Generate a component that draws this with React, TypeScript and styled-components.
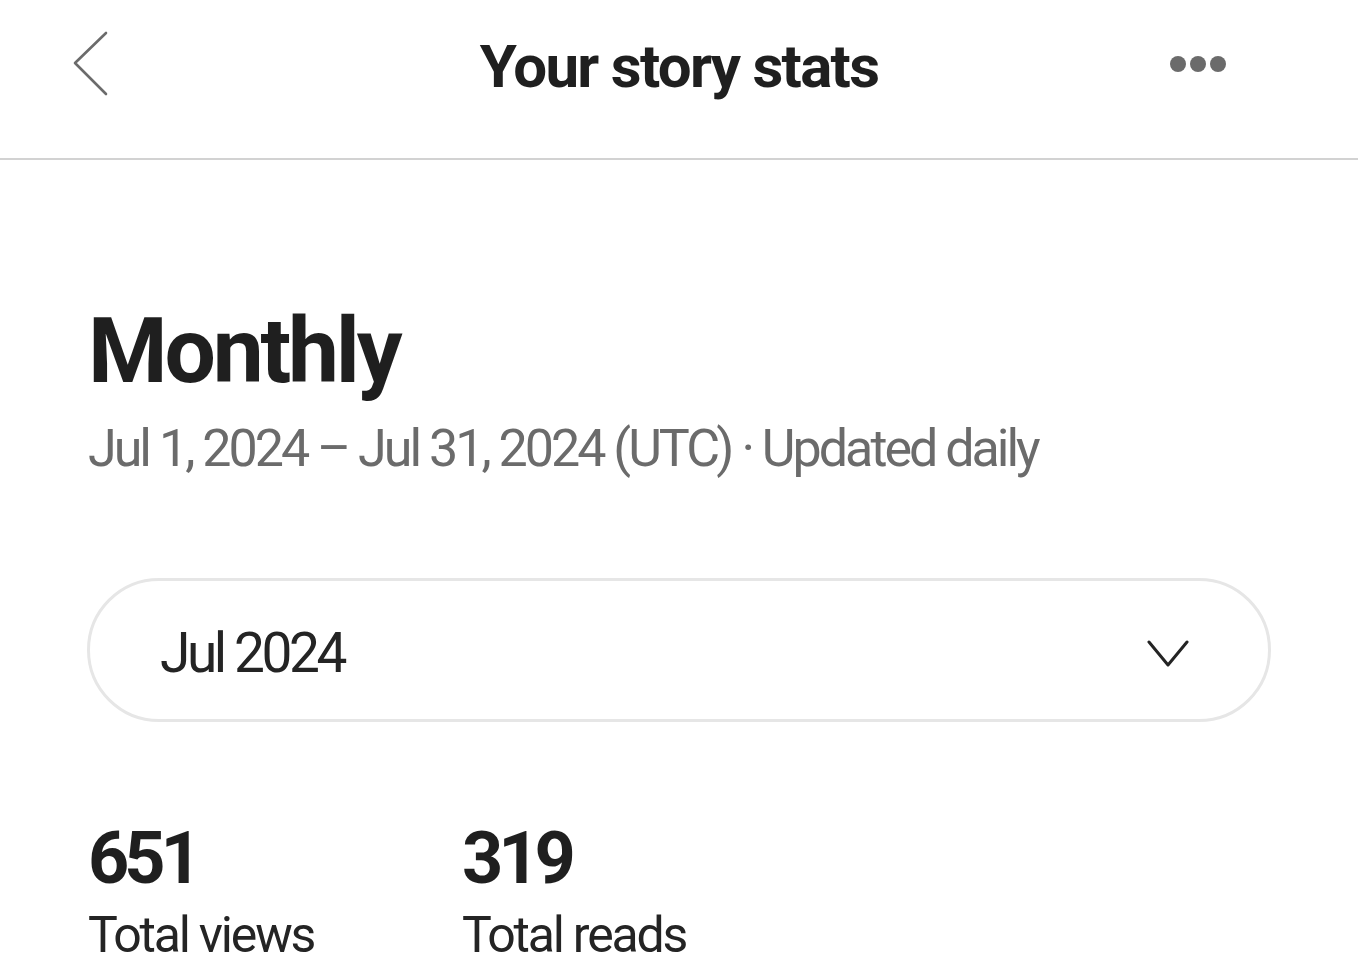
import React from "react";
import styled, { createGlobalStyle } from "styled-components";

const Global = createGlobalStyle`
  html, body { margin: 0; padding: 0; background: #ffffff; }
  body { font-family: Roboto, "Liberation Sans", Arial, sans-serif; color: #242424; overflow: hidden; }
  * { box-sizing: border-box; }
`;

const Page = styled.div`
  width: 1358px;
  height: 975px;
  overflow: hidden;
  background: #fff;
`;

const Header = styled.header`
  height: 160px;
  padding: 0 0 30px 0;
  border-bottom: 2px solid #d2d2d2;
  display: grid;
  grid-template-columns: 1fr auto 1fr;
  align-items: center;
`;

const BackButton = styled.button`
  justify-self: start;
  margin-left: 70px;
  padding: 0;
  border: none;
  background: none;
  width: 42px;
  height: 66px;
  display: flex;
  align-items: center;
  justify-content: center;
  color: #6b6b6b;
`;

const Title = styled.h1`
  margin: 5px 0 0 0;
  font-size: 60px;
  line-height: 60px;
  font-weight: 700;
  letter-spacing: -1.7px;
  color: #1f1f1f;
`;

const MoreButton = styled.button`
  justify-self: end;
  margin-right: 132px;
  padding: 0;
  border: none;
  background: none;
  display: flex;
  gap: 4px;
  align-items: center;
`;

const Dot = styled.span`
  width: 16px;
  height: 16px;
  border-radius: 50%;
  background: #6b6b6b;
`;

const Content = styled.main`
  padding: 0 87px 0 87px;
`;

const Heading = styled.h2`
  margin: 146px 0 0 1px;
  font-size: 91px;
  line-height: 91px;
  font-weight: 700;
  letter-spacing: -3.2px;
  color: #1f1f1f;
`;

const Subtitle = styled.p`
  margin: 26px 0 0 1px;
  font-size: 52px;
  line-height: 52px;
  font-weight: 400;
  letter-spacing: -3px;
  color: #6b6b6b;
  white-space: nowrap;
`;

const Select = styled.div`
  margin-top: 103px;
  height: 144px;
  border: 3px solid #e6e6e6;
  border-radius: 72px;
  display: flex;
  align-items: center;
  justify-content: space-between;
  padding: 7px 79px 0 70px;
`;

const SelectValue = styled.span`
  font-size: 55px;
  line-height: 55px;
  letter-spacing: -3.4px;
  color: #242424;
`;

const Stats = styled.div`
  margin: 101px 0 0 1px;
  display: grid;
  grid-template-columns: 374px 1fr;
`;

const Stat = styled.div`
  display: flex;
  flex-direction: column;
`;

const StatValue = styled.span`
  font-size: 72px;
  line-height: 72px;
  font-weight: 700;
  letter-spacing: -5px;
  color: #1f1f1f;
`;

const StatLabel = styled.span`
  margin-top: 15px;
  font-size: 50px;
  line-height: 50px;
  letter-spacing: -2.2px;
  color: #242424;
`;

export default function App() {
  return (
    <Page>
      <Global />
      <Header>
        <BackButton aria-label="Back">
          <svg width="40" height="66" viewBox="0 0 40 66" fill="none">
            <path d="M35 2 L4 32 L35 63" stroke="currentColor" strokeWidth="2.6" strokeLinecap="round" strokeLinejoin="round" />
          </svg>
        </BackButton>
        <Title>Your story stats</Title>
        <MoreButton aria-label="More">
          <Dot />
          <Dot />
          <Dot />
        </MoreButton>
      </Header>
      <Content>
        <Heading>Monthly</Heading>
        <Subtitle>Jul 1, 2024 – Jul 31, 2024 (UTC) · Updated daily</Subtitle>
        <Select>
          <SelectValue>Jul 2024</SelectValue>
          <svg width="42" height="30" viewBox="0 0 42 30" fill="none">
            <path d="M2 3 L21 26 L40 3" stroke="#242424" strokeWidth="3" strokeLinecap="round" strokeLinejoin="round" />
          </svg>
        </Select>
        <Stats>
          <Stat>
            <StatValue>651</StatValue>
            <StatLabel>Total views</StatLabel>
          </Stat>
          <Stat>
            <StatValue>319</StatValue>
            <StatLabel>Total reads</StatLabel>
          </Stat>
        </Stats>
      </Content>
    </Page>
  );
}
